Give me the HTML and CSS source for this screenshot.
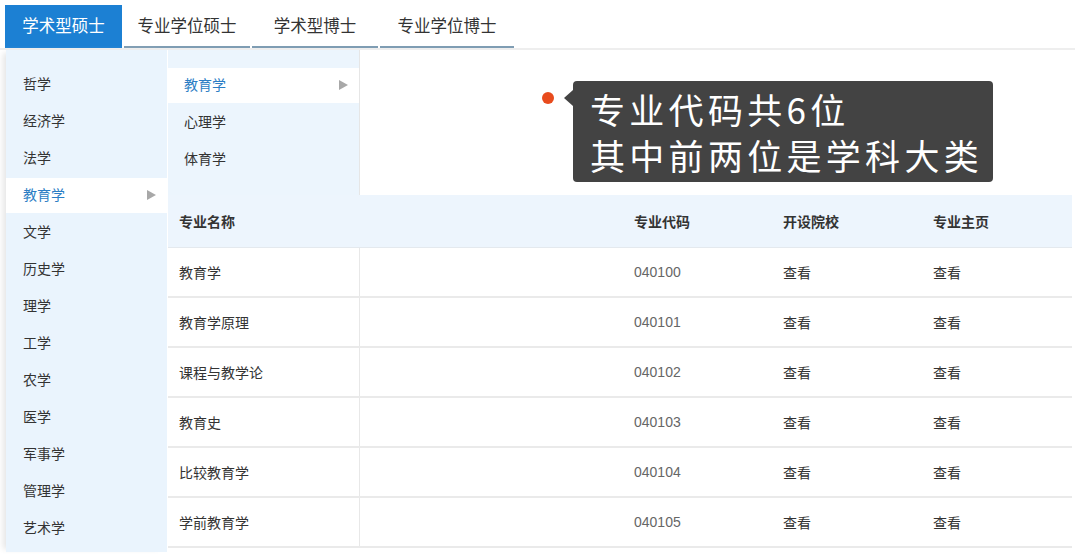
FILE: index.html
```html
<!DOCTYPE html>
<html lang="zh-CN">
<head>
    <meta charset="UTF-8">
    <meta name="viewport" content="width=device-width, initial-scale=1.0">
    <title>学科专业目录</title>
    <link rel="stylesheet" href="styles.css">
</head>
<body>
    <div class="tabs">
        <div class="tab tab--active">学术型硕士</div>
        <div class="tab">专业学位硕士</div>
        <div class="tab">学术型博士</div>
        <div class="tab">专业学位博士</div>
    </div>
    <div class="main">
        <ul class="menu">
            <li>哲学</li>
            <li>经济学</li>
            <li>法学</li>
            <li class="menu__item--active">教育学<span class="arrow"></span></li>
            <li>文学</li>
            <li>历史学</li>
            <li>理学</li>
            <li>工学</li>
            <li>农学</li>
            <li>医学</li>
            <li>军事学</li>
            <li>管理学</li>
            <li>艺术学</li>
        </ul>
        <div class="content">
            <div class="top">
                <ul class="submenu">
                    <li class="submenu__item--active">教育学<span class="arrow"></span></li>
                    <li>心理学</li>
                    <li>体育学</li>
                </ul>
                <div class="blank"></div>
                <span class="dot"></span>
                <div class="tip">
                    <div class="tip__line">专业代码共6位</div>
                    <div class="tip__line">其中前两位是学科大类</div>
                </div>
            </div>
            <div class="table">
                <div class="row row--head">
                    <div class="cell cell--name">专业名称</div>
                    <div class="cell"></div>
                    <div class="cell">专业代码</div>
                    <div class="cell">开设院校</div>
                    <div class="cell">专业主页</div>
                </div>
                <div class="row">
                    <div class="cell cell--name">教育学</div>
                    <div class="cell"></div>
                    <div class="cell cell--code">040100</div>
                    <div class="cell">查看</div>
                    <div class="cell">查看</div>
                </div>
                <div class="row">
                    <div class="cell cell--name">教育学原理</div>
                    <div class="cell"></div>
                    <div class="cell cell--code">040101</div>
                    <div class="cell">查看</div>
                    <div class="cell">查看</div>
                </div>
                <div class="row">
                    <div class="cell cell--name">课程与教学论</div>
                    <div class="cell"></div>
                    <div class="cell cell--code">040102</div>
                    <div class="cell">查看</div>
                    <div class="cell">查看</div>
                </div>
                <div class="row">
                    <div class="cell cell--name">教育史</div>
                    <div class="cell"></div>
                    <div class="cell cell--code">040103</div>
                    <div class="cell">查看</div>
                    <div class="cell">查看</div>
                </div>
                <div class="row">
                    <div class="cell cell--name">比较教育学</div>
                    <div class="cell"></div>
                    <div class="cell cell--code">040104</div>
                    <div class="cell">查看</div>
                    <div class="cell">查看</div>
                </div>
                <div class="row">
                    <div class="cell cell--name">学前教育学</div>
                    <div class="cell"></div>
                    <div class="cell cell--code">040105</div>
                    <div class="cell">查看</div>
                    <div class="cell">查看</div>
                </div>
            </div>
        </div>
    </div>
</body>
</html>
```

FILE: styles.css
```css
body {
    margin: 0;
    font-family: "Liberation Sans", "Noto Sans CJK SC", sans-serif;
    font-size: 14px;
    color: #333333;
    background-color: #ffffff;
    height: 554px;
    overflow: hidden;
}

ul {
    list-style: none;
    margin: 0;
    padding: 0;
}

/* top tabs */
.tabs {
    display: flex;
    gap: 2px;
    padding: 5px 0 0 5px;
    height: 50px;
    box-sizing: border-box;
    border-bottom: 2px solid #eeeeee;
    width: 1075px;
}

.tab {
    width: 126px;
    height: 41px;
    line-height: 42px;
    text-align: center;
    font-size: 16.5px;
    color: #333333;
    border-bottom: 2px solid #7f9db3;
}

.tab--active {
    width: 117px;
    background-color: #1c80d3;
    color: #ffffff;
    border-bottom-color: #1c80d3;
}

.tab:last-child {
    width: 134px;
}

.main {
    display: flex;
    height: 502px;
}

/* left menu */
.menu {
    width: 161px;
    margin-left: 6px;
    padding-top: 16px;
    background-color: #eaf4fd;
    box-shadow: -6px 0 6px -3px #e6e6e6;
}

.menu li,
.submenu li {
    position: relative;
    height: 37px;
    line-height: 37px;
    padding-left: 17px;
}

.menu .menu__item--active,
.submenu .submenu__item--active {
    color: #2b7dc4;
    background-color: #ffffff;
    height: 35px;
    line-height: 35px;
    margin: 1px 0;
}

.arrow {
    position: absolute;
    right: 11px;
    top: 12px;
    border-left: 9px solid #a8a8a8;
    border-top: 5px solid transparent;
    border-bottom: 5px solid transparent;
}

/* content */
.content {
    width: 904px;
    margin-left: 1px;
}

.top {
    position: relative;
    display: flex;
    height: 145px;
}

.submenu {
    width: 192px;
    padding-top: 17px;
    background-color: #ecf5fd;
    border-right: 1px solid #e6e6e6;
    box-sizing: border-box;
}

.submenu li {
    padding-left: 16px;
}

.dot {
    position: absolute;
    left: 374px;
    top: 42px;
    width: 12px;
    height: 12px;
    border-radius: 50%;
    background-color: #e84b1d;
}

.tip {
    position: absolute;
    left: 405px;
    top: 31px;
    width: 420px;
    height: 101px;
    box-sizing: border-box;
    padding: 5px 0 0 17px;
    background-color: #434343;
    border-radius: 4px;
    color: #ffffff;
    font-family: "Noto Sans CJK SC", sans-serif;
    font-size: 35px;
    letter-spacing: 4.3px;
}

.tip__line {
    height: 46px;
    line-height: 46px;
}

.tip::before {
    content: "";
    position: absolute;
    left: -9px;
    top: 9px;
    border-right: 9px solid #434343;
    border-top: 8px solid transparent;
    border-bottom: 8px solid transparent;
}

/* table */
.row {
    display: grid;
    grid-template-columns: 192px 263px 149px 150px 150px;
    height: 50px;
    border-bottom: 2px solid #eaeaea;
    box-sizing: border-box;
}

.row--head {
    height: 53px;
    background-color: #edf5fd;
    font-weight: bold;
    border-bottom: 1px solid #e4e9ee;
}

.cell {
    display: flex;
    align-items: center;
    padding-left: 11px;
}

.cell--name {
    border-right: 1px solid #e8e8e8;
}

.row--head .cell--name {
    border-right: none;
}

.cell--code {
    color: #666666;
}
```
